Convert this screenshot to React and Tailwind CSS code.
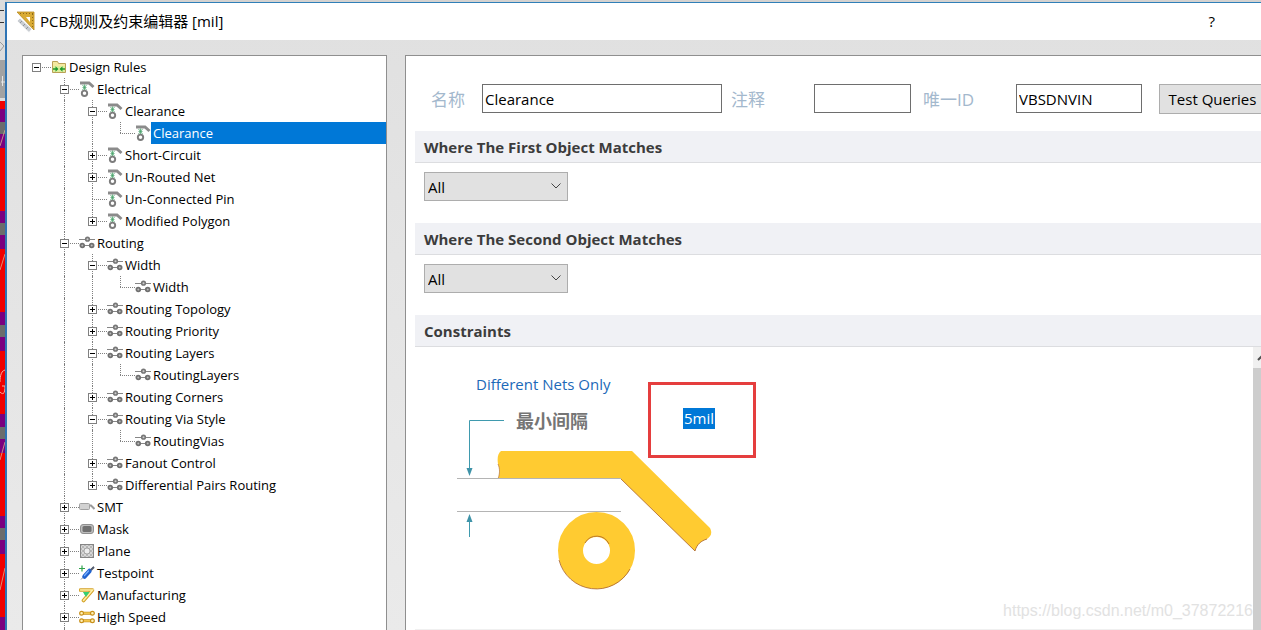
import React, { useState } from "react";

const treeData = {
  label: "Design Rules",
  icon: "folder",
  children: [
    {
      label: "Electrical",
      icon: "electrical",
      children: [
        {
          label: "Clearance",
          icon: "electrical",
          children: [{ label: "Clearance", icon: "electrical", selected: true }],
        },
        { label: "Short-Circuit", icon: "electrical", closed: true },
        { label: "Un-Routed Net", icon: "electrical", closed: true },
        { label: "Un-Connected Pin", icon: "electrical" },
        { label: "Modified Polygon", icon: "electrical", closed: true },
      ],
    },
    {
      label: "Routing",
      icon: "routing",
      children: [
        {
          label: "Width",
          icon: "routing",
          children: [{ label: "Width", icon: "routing" }],
        },
        { label: "Routing Topology", icon: "routing", closed: true },
        { label: "Routing Priority", icon: "routing", closed: true },
        {
          label: "Routing Layers",
          icon: "routing",
          children: [{ label: "RoutingLayers", icon: "routing" }],
        },
        { label: "Routing Corners", icon: "routing", closed: true },
        {
          label: "Routing Via Style",
          icon: "routing",
          children: [{ label: "RoutingVias", icon: "routing" }],
        },
        { label: "Fanout Control", icon: "routing", closed: true },
        { label: "Differential Pairs Routing", icon: "routing", closed: true },
      ],
    },
    { label: "SMT", icon: "smt", closed: true },
    { label: "Mask", icon: "mask", closed: true },
    { label: "Plane", icon: "plane", closed: true },
    { label: "Testpoint", icon: "testpoint", closed: true },
    { label: "Manufacturing", icon: "manufacturing", closed: true },
    { label: "High Speed", icon: "highspeed", closed: true },
  ],
};

const icons = {
  folder: (
    <>
      <path d="M1.5 13.5v-11h5l1 2h7v9z" fill="#f3e9a0" stroke="#b9a056" />
      <path d="M2 7h12v6H2z" fill="#dcee9c" />
      <path d="M2 10h3M14 10h-3" stroke="#1f9a2c" strokeWidth="1.4" />
      <path d="M4.5 7.2l3 2.800-3 2.800zM11.500 7.200l-3 2.800 3 2.800z" fill="#1f9a2c" />
    </>
  ),
  electrical: (
    <>
      <path d="M1 2h9l4.5 4" fill="none" stroke="#8b8b8b" strokeWidth="3" />
      <path d="M3.5 4l4 5M7.5 4l-4 5M5.5 3.5v6M3.5 6.5h4" stroke="#4aa56c" strokeWidth="0.8" />
      <circle cx="5.5" cy="12.3" r="2.7" fill="#fff" stroke="#7c7c7c" strokeWidth="1.9" />
    </>
  ),
  routing: (
    <>
      <path d="M0 4.5h16M1 10.5h14" stroke="#868686" strokeWidth="1.2" />
      <circle cx="8.5" cy="4.2" r="1.8" fill="#ccc" stroke="#777" strokeWidth="1.6" />
      <circle cx="3.3" cy="10.5" r="1.900" fill="#bbb" stroke="#707070" strokeWidth="1.8" />
      <circle cx="12.7" cy="10.5" r="1.900" fill="#bbb" stroke="#707070" strokeWidth="1.8" />
    </>
  ),
  smt: (
    <>
      <path d="M9 6.5h3l3.5 3.5" fill="none" stroke="#999" strokeWidth="2" />
      <rect x="0.5" y="4.5" width="10" height="6" rx="1" fill="#d2d2d2" stroke="#a2a2a2" />
    </>
  ),
  mask: (
    <>
      <rect x="1.5" y="3.5" width="13" height="9" rx="2.5" fill="#bdbdbd" stroke="#909090" />
      <rect x="3.5" y="5" width="9" height="6" rx="1.5" fill="#707070" />
    </>
  ),
  plane: (
    <>
      <rect x="1.5" y="1.5" width="13" height="13" fill="#d6d6d6" stroke="#858585" />
      <path
        d="M2 6l4-4M2 10l8-8M2 14L14 2M6 14l8-8M10 14l4-4M2 10l4 4M2 6l8 8M2 2l12 12M6 2l8 8M10 2l4 4"
        stroke="#a9a9a9"
        strokeWidth="0.7"
      />
      <circle cx="8" cy="8" r="3" fill="#ececec" stroke="#999" strokeWidth="0.8" />
    </>
  ),
  testpoint: (
    <>
      <path d="M0 3.5h6M3 0.5v6" stroke="#2fa24b" strokeWidth="1.2" />
      <path d="M2 14.5L14.5 1.5" stroke="#8b8f98" />
      <path d="M5.500 11.500l5-5.500" stroke="#2163cf" strokeWidth="4.500" strokeLinecap="round" />
      <path d="M5.5 10.5l4-4.5" stroke="#79b0ff" strokeWidth="1.2" strokeLinecap="round" />
      <path d="M12 5l3-3" stroke="#555e70" strokeWidth="2" />
    </>
  ),
  manufacturing: (
    <>
      <path d="M4 5h8l-4.5 6z" fill="#35cf73" />
      <path
        d="M1.5 3h12L4.5 13.5"
        fill="none"
        stroke="#d3a026"
        strokeWidth="3.6"
        strokeLinejoin="round"
        strokeLinecap="round"
      />
      <path d="M1.5 3h12L4.5 13.5" fill="none" stroke="#fff0a8" strokeWidth="1.6" strokeLinecap="round" />
      <path d="M4.500 5h6l-3.500 5z" fill="#35cf73" />
    </>
  ),
  highspeed: (
    <>
      <path d="M2 4.2h12M2 11.8h12" stroke="#c8901a" strokeWidth="3" />
      <path d="M2 4.2h12M2 11.8h12" stroke="#ffd860" strokeWidth="1.2" />
      {[4.2, 11.8].map((cy) => (
        <g key={cy} fill="#fff1b8" stroke="#c8901a" strokeWidth="1.2">
          <circle cx="2.6" cy={cy} r="1.9" />
          <circle cx="13.4" cy={cy} r="1.9" />
        </g>
      ))}
    </>
  ),
};

const RuleIcon = ({ name }) => (
  <svg width="16" height="16" viewBox="0 0 16 16" className="shrink-0" aria-hidden="true">
    {icons[name]}
  </svg>
);

// one 28px column of the tree, holds a dotted guide line
const Guide = ({ line }) => (
  <span className="flex w-7 shrink-0 self-stretch pl-[13px]">
    {line && <span className="border-l border-dotted border-[#808080]" />}
  </span>
);

const TreeNode = ({ node, guides = [], last = true, root = false }) => {
  const [open, setOpen] = useState(!node.closed);
  const hasToggle = node.children || node.closed;

  return (
    <li>
      <div className="flex h-[22px] items-center">
        {guides.map((line, i) => (
          <Guide key={i} line={line} />
        ))}
        <span className="relative flex w-7 shrink-0 flex-col self-stretch pl-[13px]">
          <span className={root ? "h-[11px]" : "h-[11px] border-l border-dotted border-[#808080]"} />
          <span
            className={
              last
                ? "h-[11px] border-t border-dotted border-[#808080]"
                : "h-[11px] border-t border-l border-dotted border-[#808080]"
            }
          />
          {hasToggle && (
            <button
              onClick={() => setOpen(!open)}
              aria-label={"Toggle " + node.label}
              className="absolute top-[7px] left-[9px] flex size-[9px] items-center justify-center border border-[#808080] bg-white"
            >
              <svg width="7" height="7" viewBox="0 0 7 7" className="shrink-0" stroke="#000">
                <path d={open ? "M1 3.5h5" : "M1 3.5h5M3.5 1v5"} />
              </svg>
            </button>
          )}
        </span>
        <RuleIcon name={node.icon} />
        <span
          className={
            node.selected
              ? "flex h-[22px] flex-1 items-center bg-[#0078d7] pt-[2px] pl-[2px] text-white"
              : "flex h-[22px] flex-1 items-center pt-[2px] pl-[2px]"
          }
        >
          {node.label}
        </span>
      </div>
      {open && node.children && (
        <ul>
          {node.children.map((child, i) => (
            <TreeNode
              key={child.label}
              node={child}
              guides={[...guides, !last]}
              last={!root && i === node.children.length - 1}
            />
          ))}
        </ul>
      )}
    </li>
  );
};

const reds = [148, 249, 351, 453, 554];

// sliver of the board editor that shows behind the dialog
const BoardEdge = () => (
  <svg width="5" height="630" viewBox="0 0 5 630" className="shrink-0" aria-hidden="true">
    <path d="M0 0h5v60H0z" fill="#dcdcdc" />
    <path d="M0 10.5h4M0 22.5h4" stroke="#333" />
    <path d="M0 42l4 4-4 5" fill="none" stroke="#9a9a9a" />
    <path d="M0 60h5v38H0z" fill="#a2a2a2" />
    <path d="M1 82h4M2.500 76v10" stroke="#e6e6e6" />
    <path d="M0 98h5v3H0z" fill="#dcdcdc" />
    <path d="M0 101h5v529H0z" fill="#7b007f" />
    <path d="M0 101h5v8H0z" fill="#f00000" />
    {reds.map((y) => (
      <g key={y}>
        <path d={`M0 ${y - 26}h5v12H0z`} fill="#6c6c6c" />
        <path d={`M0 ${y}h5v63H0z`} fill="#f00000" />
      </g>
    ))}
    <path d="M0 146l5-16M0 270l5-16M0 460l5-18M0 590l5-22" stroke="#d8b090" strokeWidth="0.8" />
    <path d="M5 370c-5 1-5 10-5 12M0 392c4 4 5 0 5-6H2" fill="none" stroke="#f4b0a0" />
  </svg>
);

const TitleIcon = () => (
  <svg width="20" height="22" viewBox="0 0 20 22" className="shrink-0" aria-hidden="true">
    <path d="M0 1h17v18z" fill="#d9ab35" stroke="#b98b22" strokeWidth="0.8" />
    <path d="M9 6h4v5z" fill="#fff" />
    <path d="M3 2.500h13M15.500 3v13" stroke="#8d6a18" strokeDasharray="1 2" />
    <path d="M0 10l3-3 12 11-3 3.500z" fill="#c9cdd2" stroke="#fff" strokeWidth="0.8" />
    <path d="M3 12l2-2M6 15l2-2M9 18l2-2" stroke="#8f959c" />
  </svg>
);

const SectionTitle = ({ children }) => (
  <h2 className="flex h-8 shrink-0 items-center border-b border-[#dcdde0] bg-[#f0f1f5] pt-[2px] pl-[9px] text-[15px] font-bold text-[#3c3c3c]">
    {children}
  </h2>
);

const MatchSection = ({ title, id }) => (
  <section>
    <SectionTitle>{title}</SectionTitle>
    <div className="px-[9px] pt-[9px] pb-[22px]">
      <div className="relative w-36">
        <select
          id={id}
          aria-label={title}
          className="block h-[29px] w-full appearance-none border border-[#adadad] bg-[#e1e1e1] pt-[2px] pl-[3px] text-[15px] text-black"
        >
          <option>All</option>
        </select>
        <svg
          width="12"
          height="8"
          viewBox="0 0 12 8"
          className="pointer-events-none absolute top-[10px] right-[6px]"
          fill="none"
          stroke="#444"
        >
          <path d="M1.500 1.500L6 6l4.500-4.500" />
        </svg>
      </div>
    </div>
  </section>
);

const ClearanceDrawing = () => (
  <svg width="360" height="260" viewBox="415 347 360 260" className="col-start-1 row-start-1" aria-hidden="true">
    <path d="M504 420.500H469.500V470" fill="none" stroke="#3f9aae" />
    <path d="M466.500 468h6l-3 8zM466.500 522h6l-3-8z" fill="#3f93a8" />
    <path d="M469.500 520v17" stroke="#3f9aae" />
    <path
      d="M501 451H632L710 528C713 534 710 537 707 539C701 541 697 544 695 551L621 479H498C500 473 500 469 498 464C497 458 498 453 501 451z"
      fill="#ffcb31"
    />
    <path d="M621 479L695 551C697 544 701 541 707 539" fill="none" stroke="#a8612a" strokeWidth="0.8" />
    <path d="M498 464C500 469 500 473 498 479" fill="none" stroke="#a8612a" strokeWidth="0.6" />
    <circle cx="596.500" cy="550.500" r="26" fill="none" stroke="#ffcb31" strokeWidth="25" />
    <path d="M559 560A38.500 38.500 0 0 0 630 569" fill="none" stroke="#a8612a" strokeWidth="0.8" />
    <path d="M585 543A13.500 13.500 0 0 1 609 544" fill="none" stroke="#a8612a" strokeWidth="0.8" />
    <path d="M457 478.500H621M457 511.500H621" stroke="#b4b4b4" />
  </svg>
);

const inputStyle = "h-[29px] shrink-0 border border-[#6e6e6e] bg-white px-[2px] text-[15px] text-black outline-none";
const labelStyle = "shrink-0 pt-[2px] text-[17px] text-[#a3b8cd]";

export default function App() {
  return (
    <div className="flex h-screen overflow-hidden bg-[#d4d2d0] font-['Open_Sans','Noto_Sans_CJK_SC',sans-serif] text-black">
      <BoardEdge />
      <div className="mt-[2px] flex min-w-0 flex-1 flex-col border-t border-l-2 border-t-[#2f7fb8] border-l-[#2f74b4] bg-linear-to-b from-[#e0e0e0] to-[#eaeaea]">
        <header className="flex h-[37px] shrink-0 items-center bg-white pr-[46px] pl-[10px]">
          <TitleIcon />
          <h1 className="flex-1 pl-[3px] text-[15px]">PCB规则及约束编辑器 [mil]</h1>
          <button className="text-[15px]">?</button>
        </header>

        <div className="flex min-h-0 flex-1 pt-[15px] pl-[15px]">
          <nav className="flex w-[365px] shrink-0 flex-col overflow-hidden border-x border-t border-[#8f8f8f] bg-white text-[13px]">
            <ul>
              <TreeNode node={treeData} root />
            </ul>
            <div className="flex flex-1 pl-7">
              <Guide line />
            </div>
          </nav>

          <main className="ml-[18px] flex min-w-0 flex-1 flex-col overflow-hidden border-t border-l border-[#8f8f8f] bg-white pl-[9px]">
            <div className="flex h-[75px] shrink-0 items-center pt-[10px] pl-4">
              <label htmlFor="name" className={`w-[51px] ${labelStyle}`}>
                名称
              </label>
              <input id="name" defaultValue="Clearance" className={`w-60 ${inputStyle}`} />
              <label htmlFor="comment" className={`w-[92px] pl-[9px] ${labelStyle}`}>
                注释
              </label>
              <input id="comment" className={`w-[97px] ${inputStyle}`} />
              <label htmlFor="uid" className={`w-[105px] pl-3 ${labelStyle}`}>
                唯一ID
              </label>
              <input id="uid" defaultValue="VBSDNVIN" className={`w-[126px] ${inputStyle}`} />
              <button className="ml-[17px] h-[30px] w-[107px] shrink-0 border border-[#adadad] bg-[#e1e1e1] pt-[2px] text-[15px] whitespace-nowrap">
                Test Queries
              </button>
            </div>

            <MatchSection title="Where The First Object Matches" id="first" />
            <MatchSection title="Where The Second Object Matches" id="second" />

            <SectionTitle>Constraints</SectionTitle>
            <div className="flex min-h-0 flex-1">
              <div className="relative flex-1 overflow-hidden border-b border-[#f0f0f0]">
                <div className="grid">
                  <ClearanceDrawing />
                  <div className="col-start-1 row-start-1 flex items-start">
                    <div className="flex w-[233px] flex-col pt-[26px] pl-[61px]">
                      <select
                        aria-label="Nets"
                        className="h-[22px] appearance-none self-start bg-transparent text-[15px] text-[#1c69b8]"
                      >
                        <option>Different Nets Only</option>
                      </select>
                      <label htmlFor="gap" className="mt-[14px] pl-10 text-[18px] leading-6 font-bold text-[#757575]">
                        最小间隔
                      </label>
                    </div>
                    <div className="mt-[35px] flex h-[76px] w-[108px] items-center justify-center border-3 border-[#e53e3e] pr-[6px]">
                      <input
                        id="gap"
                        defaultValue="5mil"
                        className="mb-1 h-[21px] w-8 bg-[#0078d7] text-center text-[15px] text-white outline-none"
                      />
                    </div>
                  </div>
                </div>
                <span className="absolute right-0 bottom-2 font-['Liberation_Sans',sans-serif] text-[16px] leading-5 text-[#e2e2e2]">
                  https://blog.csdn.net/m0_37872216
                </span>
              </div>
              <div className="flex w-2 shrink-0 flex-col overflow-hidden bg-[#cdcdcd]">
                <svg width="17" height="21" viewBox="0 0 17 21" className="shrink-0 bg-[#f0f0f0]">
                  <path d="M5 13l3.500-3.500L12 13" fill="none" stroke="#505050" strokeWidth="2" />
                </svg>
              </div>
            </div>
          </main>
        </div>
      </div>
    </div>
  );
}
